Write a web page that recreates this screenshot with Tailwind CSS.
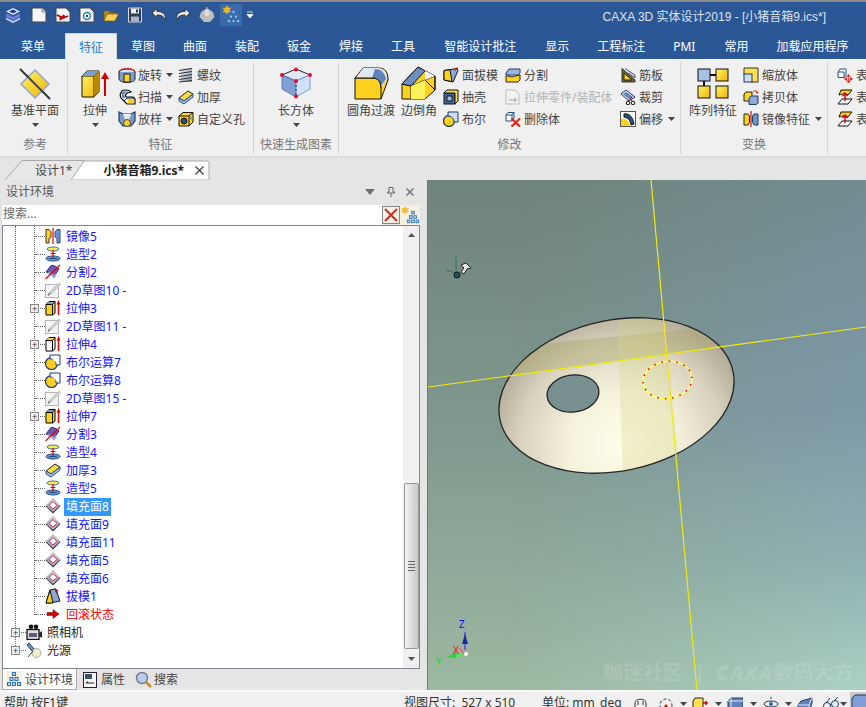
<!DOCTYPE html>
<html lang="zh">
<head>
<meta charset="utf-8">
<script src="https://cdn.jsdelivr.net/npm/@tailwindcss/browser@4"></script>
</head>
<body class="m-0 bg-[#e5e5e5]">
<svg width="0" height="0" class="absolute">
<defs>
<linearGradient id="gy" x1="0" y1="0" x2="1" y2="1"><stop offset="0" stop-color="#fff36a"/><stop offset="1" stop-color="#f0b400"/></linearGradient>
<linearGradient id="gb" x1="0" y1="0" x2="1" y2="1"><stop offset="0" stop-color="#c9d6ef"/><stop offset="1" stop-color="#5f82b8"/></linearGradient>
<linearGradient id="gg" x1="0" y1="0" x2="1" y2="1"><stop offset="0" stop-color="#e8edf5"/><stop offset="1" stop-color="#8b97ad"/></linearGradient>
<symbol id="tree" viewBox="0 0 16 16"><g fill="#bcd6f0" stroke="#2f6fb5" stroke-width="1"><rect x="6.5" y="1.5" width="3" height="3"/><rect x="4" y="6.500" width="3" height="3"/><rect x="9" y="6.500" width="3" height="3"/><rect x="1.500" y="11.500" width="3" height="3"/><rect x="6.500" y="11.500" width="3" height="3"/><rect x="11.500" y="11.500" width="3" height="3"/></g></symbol>
<symbol id="ext" viewBox="0 0 16 16"><path d="M1 4.500 4 1.500H10V13L7.500 15H1Z" fill="#ffd21f" stroke="#000"/><path d="M1 4.500H7.500L10 1.500M7.500 4.500V15" fill="none" stroke="#000"/><path d="M1.500 4 4 2H9L7 4Z" fill="#7aa0c8"/><path d="M13.500 15V4" stroke="#e00000" stroke-width="1.500"/><path d="M13.500 0 11.500 4.500H15.500Z" fill="#e00000"/></symbol>
<symbol id="extw" viewBox="0 0 16 16"><path d="M1 4.500 4 1.500H10V13L7.500 15H1Z" fill="#fff" stroke="#000"/><path d="M1 4.500H7.500L10 1.500M7.500 4.500V15" fill="none" stroke="#000"/><path d="M1.500 4 4 2H9L7 4Z" fill="#ffd21f"/><path d="M13.500 15V4" stroke="#e00000" stroke-width="1.500"/><path d="M13.500 0 11.500 4.500H15.500Z" fill="#e00000"/></symbol>
<symbol id="mir" viewBox="0 0 16 16"><path d="M1 1.500H4L6 4V9L4 10.500V15H1Z" fill="#ffd21f" stroke="#333"/><path d="M15 1.500H12L10 4V9L12 10.500V15H15Z" fill="#6d96c7" stroke="#2a4f85"/><path d="M8 0V16" stroke="#e00000" stroke-width="1.200"/></symbol>
<symbol id="shape" viewBox="0 0 16 16"><ellipse cx="8" cy="3" rx="6" ry="2" fill="#ffe94a" stroke="#3a6ea5"/><ellipse cx="8" cy="12.500" rx="7" ry="2.500" fill="#6d96c7" stroke="#1f4f8b"/><path d="M8 4V12" stroke="#e00000" stroke-width="1.200"/><path d="M5.500 7.500H10.500" stroke="#e00000"/><path d="M4 12.500H12" stroke="#1f4f8b"/></symbol>
<symbol id="split" viewBox="0 0 16 16"><path d="M1 8 6 1.500C9 1 12 3 14 5L9 12C7 10 4 8.500 1 8Z" fill="#6a5bb0" stroke="#332a78"/><path d="M3 9C6 9.500 8 11 9 13L11 10" fill="none" stroke="#a69de0" stroke-width="2"/><path d="M0.500 15 15 1" stroke="#e00000" stroke-width="1.100"/></symbol>
<symbol id="sk" viewBox="0 0 16 16"><rect x=".5" y="2.500" width="13" height="13" fill="#f4f4f4" stroke="#b4b4b4"/><path d="M5 11.500 15 1.500" stroke="#bdbdbd" stroke-width="3"/><path d="M5 11.500 14 2.500" stroke="#e8e8e8" stroke-width="1"/><path d="M3 13.500 5 11" stroke="#777" stroke-width="1.500"/></symbol>
<symbol id="bool" viewBox="0 0 16 16"><circle cx="6.500" cy="9.500" r="6" fill="#ffcf1f" stroke="#1c3c66" stroke-width="1.200"/><path d="M5 5V1H15V11H11C11.300 8 9 5 5 5Z" fill="#fff" stroke="#1c3c66"/><path d="M5.500 5.500H10.500V9.500C10.500 7.500 8 5.500 5.500 5.500Z" fill="#fff"/></symbol>
<symbol id="fill" viewBox="0 0 16 16"><path d="M8 .5 15.500 8 8 15.500 .5 8Z" fill="#2a2a2a"/><path d="M8 .5 15 7.500 8 14 1 7.500Z" fill="#a3b1d8"/><path d="M8 1 15 7.500 8 3.500 1 7.500Z" fill="#c9c9cf"/><path d="M8 3.500 12 7.500 8 11 4 7.500Z" fill="#fff" stroke="#e00000" stroke-width=".8"/></symbol>
<symbol id="draft" viewBox="0 0 16 16"><path d="M1 15 5 2 10.500 .8 15 13 5 15Z" fill="#8ea6d9" stroke="#111"/><path d="M1 15 5 2 8 15Z" fill="#ffd21f" stroke="#111"/><path d="M13 6 11 1.500M11 1.500 10.500 4M11 1.500 13.200 3" stroke="#d00000" fill="none"/></symbol>
<symbol id="thick" viewBox="0 0 16 16"><path d="M1 9 10 2 15 5 6 12Z" fill="#ffd84a" stroke="#222"/><path d="M1 9V12L6 15 15 8V5L6 12Z" fill="#a9bfe0" stroke="#2a4f85"/></symbol>
<symbol id="rev" viewBox="0 0 18 16"><ellipse cx="9" cy="5" rx="8" ry="3" fill="#d9e3f2" stroke="#222"/><path d="M1 5V12C1 14 5 15.500 9 15.500S17 14 17 12V5" fill="#7f9fc9" stroke="#222"/><rect x="6" y="7" width="6" height="8" fill="#ffd21f" stroke="#222"/><path d="M1 5C3 .5 15 .5 17 5" fill="none" stroke="#e00000" stroke-dasharray="2 1" stroke-width="1.300"/></symbol>
<symbol id="swp" viewBox="0 0 18 16"><path d="M3 4C3 1 7 .5 11 1.500L13 3 9 4C8 5 7 7 8 8H15L17 10V15H9L6 12 3 9C2 7 2 5 3 4Z" fill="#fff" stroke="#111" stroke-width="1.200"/><path d="M6 12 9 9H16" fill="none" stroke="#111"/><path d="M9 10H16V14H10Z" fill="#ffd21f"/><path d="M4 4C4 2.500 7 2 10 2.500L7 4C6 5 6 7 7 8L6 10 4 8Z" fill="#5f82b8"/></symbol>
<symbol id="loft" viewBox="0 0 18 16"><path d="M1 1 5 3H13L17 1V10L13 15H5L1 10Z" fill="#7e99c5" stroke="#1c3c66" stroke-width="1.200"/><path d="M5 3 7 9H11L13 3Z" fill="#e8edf5"/><circle cx="9" cy="12" r="3.500" fill="#ffd21f" stroke="#444"/></symbol>
<symbol id="thr" viewBox="0 0 16 16"><rect x="3" y="1" width="11" height="14" fill="url(#gg)"/><path d="M1 3.500 14 1.500M1 6.500 14 4.500M1 9.500 14 7.500M1 12.500 14 10.500M1 15 14 13.500" stroke="#333" stroke-width="1.100"/></symbol>
<symbol id="hole" viewBox="0 0 16 16"><path d="M1 5 5 1.500H15V11L11 15H1Z" fill="#ffd21f" stroke="#111"/><path d="M1 5H11V15M11 5 15 1.500" fill="none" stroke="#111"/><circle cx="6" cy="10" r="3" fill="#274f86" stroke="#111"/><circle cx="13" cy="7" r="1.500" fill="#7a93b7"/></symbol>
<symbol id="fdr" viewBox="0 0 16 16"><path d="M1 3.500 14 1.500 15 3.500 10 15 1 13Z" fill="#91a9dc" stroke="#111"/><path d="M1 13V3.500L7 2.800 9 14.500Z" fill="#ffd21f" stroke="#111"/><path d="M12 4 14.500 1M14.500 1 12.500 1.500M14.500 1V3" stroke="#c00" fill="none"/></symbol>
<symbol id="shell" viewBox="0 0 16 16"><rect x="1" y="4" width="11" height="11" fill="#3f6ea8" stroke="#111"/><path d="M1 4 4 1H15V12L12 15V4Z" fill="#ffe14d" stroke="#111"/><rect x="4" y="7" width="5" height="5" fill="#9bc0e6" stroke="#111"/></symbol>
<symbol id="bl" viewBox="0 0 16 16"><circle cx="6" cy="10" r="5.500" fill="#ffcf1f" stroke="#1c3c66" stroke-width="1.300"/><path d="M5 5V1H15V11H11C11.300 8 8.500 5 5 5Z" fill="#cfdcf0" stroke="#1c3c66"/></symbol>
<symbol id="sp" viewBox="0 0 16 16"><path d="M1 6 4 2H15V6L13 8H1Z" fill="#9db5dc" stroke="#1c3c66"/><path d="M1 9H4C7 11 9 9 15 8V13L13 15H1Z" fill="#ffd21f" stroke="#222"/></symbol>
<symbol id="gex" viewBox="0 0 16 16"><path d="M1 1H10L14 5V15H1Z" fill="#f2f2f2" stroke="#bbb"/><path d="M4 11H11M9 9 11.500 11 9 13" fill="none" stroke="#bbb" stroke-width="1.300"/></symbol>
<symbol id="del" viewBox="0 0 16 16"><path d="M1 4 3 1.500H9V8L7 10H1Z" fill="#fff" stroke="#1c4f86"/><path d="M1 4H7V10M7 4 9 1.500" fill="none" stroke="#1c4f86"/><path d="M6.500 7.500 15 15.500M15 7.500 6.500 15.500" stroke="#d8241c" stroke-width="2.200"/></symbol>
<symbol id="rib" viewBox="0 0 16 16"><path d="M2 15V1.500L15 13V15Z" fill="#6d6d2a" stroke="#333"/><path d="M4 13V6L12 13Z" fill="#ffd21f" stroke="#222"/><path d="M5 1.500 15 8V11L8 6" fill="#c7d2e8" stroke="#555"/></symbol>
<symbol id="cut" viewBox="0 0 16 16"><path d="M1 5 6 1 15 8 9 12Z" fill="#cfe0f4" stroke="#1c3c66"/><path d="M3 5 6 3 13 8 9 10Z" fill="#5f82b8"/><circle cx="8" cy="14" r="1.800" fill="none" stroke="#111"/><circle cx="13" cy="14" r="1.800" fill="none" stroke="#111"/><path d="M9 12 12 8M12 12 10 9" stroke="#d00000"/></symbol>
<symbol id="off" viewBox="0 0 16 16"><rect x=".5" y=".5" width="15" height="15" fill="#fff" stroke="#555"/><path d="M1 15V8C5 6 9 10 10 15Z" fill="#ffd21f"/><path d="M4 3C9 2 13 6 14 13L11 14C10 9 8 7 4 6Z" fill="#2a4f85" stroke="#111"/></symbol>
<symbol id="scale" viewBox="0 0 16 16"><path d="M1 1H15V15H8V8H1Z" fill="#ffe14d" stroke="#333"/><rect x="1" y="7" width="8" height="8" fill="#cfdcf0" stroke="#1c3c66"/></symbol>
<symbol id="copy" viewBox="0 0 16 16"><path d="M1 5 3 3H9V10L7 12H1Z" fill="#ffd21f" stroke="#222"/><path d="M6 9 8 7H15V14L13 15.500H6Z" fill="#8eaad6" stroke="#1c3c66"/><path d="M10 3C12 1 14 1.500 14.500 4M14.500 4 13 3.500M14.500 4 15.500 2.800" stroke="#d00000" fill="none"/></symbol>
<symbol id="mm" viewBox="0 0 16 16"><path d="M1 3H5L6.500 5V11L5 14H1Z" fill="#ffd21f" stroke="#222"/><path d="M15 3H11L9.500 5V11L11 14H15Z" fill="#6d96c7" stroke="#1c3c66"/><path d="M8 0V16" stroke="#e00000" stroke-width="1.200"/></symbol>
<symbol id="mv" viewBox="0 0 16 16"><path d="M1 5 3 2H9V9L7 10.500H1Z" fill="#fff" stroke="#1c4f86"/><path d="M1 5H7V10.500" fill="none" stroke="#1c4f86"/><path d="M11.500 8V15.500M8 12H15M11.500 7.500 10 9.500H13ZM11.500 16 10 14H13ZM7.500 12 9.500 10.500V13.500ZM15.500 12 13.500 10.500V13.500Z" stroke="#d8241c" fill="#d8241c" stroke-width=".7"/></symbol>
<symbol id="sf" viewBox="0 0 16 16"><path d="M4 1H15L11 6C8 4 6 5 2 6Z" fill="#ffd21f" stroke="#111"/><path d="M1 15 5 10H15L11 15Z" fill="#fff" stroke="#111"/><path d="M8 4V12M5.500 7 8 4 10.500 7" stroke="#d00000" stroke-width="1.400" fill="none"/></symbol>
<symbol id="cam" viewBox="0 0 16 16"><circle cx="5" cy="2.800" r="2.300" fill="#111"/><circle cx="10" cy="2.800" r="2.300" fill="#111"/><rect x="1" y="5.500" width="12" height="10" fill="#dfdfdf" stroke="#111" stroke-width="1.300"/><rect x="3" y="9" width="8" height="4" fill="#5c5a80"/><path d="M13 9 16 7V14L13 12Z" fill="#222"/></symbol>
<symbol id="lgt" viewBox="0 0 16 16"><path d="M1 3 3 1 8 7 6 9Z" fill="#6d96c7" stroke="#1c3c66"/><circle cx="10.500" cy="11" r="4.500" fill="#eeeecb" stroke="#aaa"/><path d="M2 15 7 9" stroke="#333"/></symbol>
<symbol id="wedge" viewBox="0 0 16 16"><path d="M1 8 4 4 15 1V6L12 15H1Z" fill="#5f82b8" stroke="#1c3c66"/><path d="M1 8H12V15M12 8 15 1" fill="none" stroke="#dfe8f4"/></symbol>
<symbol id="dn" viewBox="0 0 7 4"><path d="M0 0H7L3.500 4Z" fill="#444"/></symbol>
</defs>
</svg>

<div class="w-[866px] h-[707px] overflow-hidden flex flex-col text-[12px] text-[#444] font-['Noto_Sans','Noto_Sans_CJK_SC',sans-serif] leading-[16px]">

  <!-- title + tabs -->
  <div class="h-[59px] bg-[#2b5797] border-t-2 border-[#8a8a8a] flex flex-col shrink-0">
    <div class="h-[31px] flex items-start relative">
      <div class="absolute left-0 top-0 flex items-center h-[25px] pl-[5px]">
        <svg class="w-[16px] h-[16px]" viewBox="0 0 16 16"><path d="M8 1 15 4.500 8 8 1 4.500Z" fill="#e6ecfa"/><path d="M1 6.500 8 10 15 6.500V9.500L8 13 1 9.500Z" fill="#6d7fe0"/><path d="M1 10.500 8 14 15 10.500V12.500L8 16 1 12.500Z" fill="#c6cef0"/><path d="M8 2.500 12 4.500 8 6.500 4 4.500Z" fill="#24389a"/></svg>
        <svg class="w-[16px] h-[16px] ml-[10px]" viewBox="0 0 16 16"><path d="M1 1H11L15 5V15H1Z" fill="#f6f6f6" stroke="#444"/><path d="M11 1V5H15" fill="#ddd" stroke="#888"/></svg>
        <svg class="w-[16px] h-[16px] ml-[8px]" viewBox="0 0 16 16"><path d="M1 1H11L15 5V15H1Z" fill="#f6f6f6" stroke="#444"/><path d="M2 8 6 10 5 13 9 8 8 11 13 9" stroke="#c00000" stroke-width="1.800" fill="none"/></svg>
        <svg class="w-[16px] h-[16px] ml-[8px]" viewBox="0 0 16 16"><path d="M1 1H11L15 5V15H1Z" fill="#f6f6f6" stroke="#444"/><circle cx="8" cy="9" r="3.500" fill="none" stroke="#2d7fb5" stroke-width="1.500"/><rect x="7" y="8" width="2" height="2" fill="#155"/></svg>
        <svg class="w-[16px] h-[16px] ml-[8px]" viewBox="0 0 16 16"><path d="M1 4H6L7 5.500H13V7H4L1 14Z" fill="#b88e1a" stroke="#6a5210" stroke-width=".6"/><path d="M1 14 4 7H15.500L12 14Z" fill="#f5cf52" stroke="#6a5210" stroke-width=".6"/></svg>
        <svg class="w-[16px] h-[16px] ml-[8px]" viewBox="0 0 16 16"><path d="M1.500 1H14.500V15H1.500Z" fill="#2f3f55" stroke="#d8d8d8"/><rect x="4" y="1.500" width="8" height="5" fill="#eee"/><rect x="4" y="9.500" width="8" height="5" fill="#a9b5c6"/><rect x="9" y="2.500" width="2" height="3" fill="#2f3f55"/></svg>
        <svg class="w-[16px] h-[16px] ml-[8px]" viewBox="0 0 16 16"><path d="M1 6 6 1.500V4.500C11 4 15 7 15 13C13 9.500 10.500 8 6 8V10.500Z" fill="#e8e8e8" stroke="#333"/></svg>
        <svg class="w-[16px] h-[16px] ml-[8px]" viewBox="0 0 16 16"><path d="M15 6 10 1.500V4.500C5 4 1 7 1 13C3 9.500 5.500 8 10 8V10.500Z" fill="#e8e8e8" stroke="#333"/></svg>
        <svg class="w-[16px] h-[16px] ml-[8px]" viewBox="0 0 16 16"><path d="M8 1 14 5 15.500 10 11 15H5L.5 10 2 5Z" fill="#bdbdbd"/><path d="M8 1 11 7 8 10 5 7Z" fill="#e0e0e0"/><rect x="7" y="0" width="2" height="2" fill="#888"/></svg>
        <div class="w-[22px] h-[22px] ml-[5px] bg-[#3a6aa8] relative flex items-center justify-center">
          <svg class="w-[15px] h-[15px] mt-[3px] ml-[4px]"><use href="#tree"/></svg>
          <span class="absolute left-[2px] top-[0px] text-[#f5b91e] text-[11px] leading-[11px]">✱</span>
        </div>
        <svg class="w-[8px] h-[8px] ml-[4px]" viewBox="0 0 8 8"><path d="M1 1H7M1 3.500H7L4 7Z" stroke="#fff" fill="#fff" stroke-width=".8"/></svg>
      </div>
      <div class="ml-auto mr-[40px] mt-[7px] text-[#dde4ee] text-[12px] leading-[16px] font-['Liberation_Sans','Noto_Sans_CJK_SC',sans-serif]">CAXA 3D 实体设计2019 - [小猪音箱9.ics*]</div>
    </div>
    <div class="h-[26px] flex pl-[7px] text-white">
      <div class="px-[14px] pt-[6px]">菜单</div>
      <div class="px-[13px] pt-[6px] ml-[6px] bg-[#f0f0f0] text-[#1a7fd0] border border-b-0 border-[#d4d4d4] rounded-t-[1px]">特征</div>
      <div class="px-[14px] pt-[6px]">草图</div>
      <div class="px-[14px] pt-[6px]">曲面</div>
      <div class="px-[14px] pt-[6px]">装配</div>
      <div class="px-[14px] pt-[6px]">钣金</div>
      <div class="px-[14px] pt-[6px]">焊接</div>
      <div class="px-[14px] pt-[6px]">工具</div>
      <div class="px-[14px] pt-[6px] ml-[1px]">智能设计批注</div>
      <div class="px-[14px] pt-[6px] ml-[1px]">显示</div>
      <div class="px-[14px] pt-[6px]">工程标注</div>
      <div class="px-[14px] pt-[6px]">PMI</div>
      <div class="px-[14px] pt-[6px] ml-[1px]">常用</div>
      <div class="px-[14px] pt-[6px]">加载应用程序</div>
    </div>
  </div>

  <!-- ribbon -->
  <div class="h-[99px] bg-[#f0f0f0] border-b-2 border-[#dcdcdc] flex pt-[3px] pl-[3px] shrink-0 overflow-hidden [&_span]:relative [&_span]:top-[1px]">
    <!-- 参考 -->
    <div class="w-[65px] h-[92px] border-r border-[#d4d4d4] flex flex-col shrink-0">
      <div class="flex-1 flex flex-col items-center">
        <svg class="w-[34px] h-[34px] mt-[5px]" viewBox="0 0 34 34"><path d="M2 2 32 32" stroke="#333" stroke-width="2"/><path d="M17 3 31 17 17 31 3 17Z" fill="url(#gy)" stroke="#8fa8d8" stroke-width="1.500"/><path d="M9 9 25 25" stroke="#444" stroke-width="2"/></svg>
        <div class="mt-[2px]">基准平面</div>
        <svg class="w-[7px] h-[4px] mt-[4px]"><use href="#dn"/></svg>
      </div>
      <div class="h-[22px] text-center text-[#777] leading-[26px]">参考</div>
    </div>
    <!-- 特征 -->
    <div class="w-[186px] h-[92px] border-r border-[#d4d4d4] flex flex-col shrink-0">
      <div class="flex-1 flex">
        <div class="w-[38px] ml-[8px] flex flex-col items-center">
          <svg class="w-[30px] h-[30px] mt-[7px]" viewBox="0 0 30 30"><path d="M2 7 7 2H19V23L14 28H2Z" fill="url(#gy)" stroke="#111"/><path d="M2 7H14V28M14 7 19 2" fill="none" stroke="#111"/><path d="M14 7 19 2V23L14 28Z" fill="#b88a00"/><path d="M2 7 7 2H19L14 7Z" fill="#7aa0c8"/><path d="M25 27V9" stroke="#d00000" stroke-width="2"/><path d="M25 3 21 10H29Z" fill="#d00000"/></svg>
          <div class="mt-[4px]">拉伸</div>
          <svg class="w-[7px] h-[4px] mt-[4px]"><use href="#dn"/></svg>
        </div>
        <div class="w-[60px] ml-[4px] pt-[2px] flex flex-col">
          <div class="h-[22px] flex items-center"><svg class="w-[18px] h-[16px]"><use href="#rev"/></svg><span class="ml-[2px]">旋转</span><svg class="w-[7px] h-[4px] ml-[4px]"><use href="#dn"/></svg></div>
          <div class="h-[22px] flex items-center"><svg class="w-[18px] h-[16px]"><use href="#swp"/></svg><span class="ml-[2px]">扫描</span><svg class="w-[7px] h-[4px] ml-[4px]"><use href="#dn"/></svg></div>
          <div class="h-[22px] flex items-center"><svg class="w-[18px] h-[16px]"><use href="#loft"/></svg><span class="ml-[2px]">放样</span><svg class="w-[7px] h-[4px] ml-[4px]"><use href="#dn"/></svg></div>
        </div>
        <div class="pt-[2px] flex flex-col">
          <div class="h-[22px] flex items-center"><svg class="w-[16px] h-[16px]"><use href="#thr"/></svg><span class="ml-[3px]">螺纹</span></div>
          <div class="h-[22px] flex items-center"><svg class="w-[16px] h-[16px]"><use href="#thick"/></svg><span class="ml-[3px]">加厚</span></div>
          <div class="h-[22px] flex items-center"><svg class="w-[16px] h-[16px]"><use href="#hole"/></svg><span class="ml-[3px]">自定义孔</span></div>
        </div>
      </div>
      <div class="h-[22px] text-center text-[#777] leading-[26px]">特征</div>
    </div>
    <!-- 快速 -->
    <div class="w-[85px] h-[92px] border-r border-[#d4d4d4] flex flex-col shrink-0">
      <div class="flex-1 flex flex-col items-center">
        <svg class="w-[32px] h-[32px] mt-[5px]" viewBox="0 0 32 32"><path d="M16 2 30 8 16 14 2 8Z" fill="#dfe8f6" stroke="#222"/><path d="M2 8 16 14V30L2 22Z" fill="#7e9fd6" stroke="#5f7fb8"/><path d="M30 8 16 14V30L30 22Z" fill="#cfe0f7" stroke="#7e9fd6"/><path d="M16 14V30" stroke="#222" stroke-dasharray="2 2"/><circle cx="16" cy="2.500" r="2" fill="#e01030"/><circle cx="2" cy="8" r="2" fill="#e01030"/><circle cx="30" cy="8" r="2" fill="#e01030"/><circle cx="16" cy="14" r="2" fill="#e01030"/><circle cx="16" cy="29.500" r="2" fill="#e01030"/></svg>
        <div class="mt-[4px]">长方体</div>
        <svg class="w-[7px] h-[4px] mt-[4px]"><use href="#dn"/></svg>
      </div>
      <div class="h-[22px] text-center text-[#777] leading-[26px] whitespace-nowrap">快速生成图素</div>
    </div>
    <!-- 修改 -->
    <div class="w-[342px] h-[92px] border-r border-[#d4d4d4] flex flex-col shrink-0">
      <div class="flex-1 flex">
        <div class="w-[48px] ml-[8px] flex flex-col items-center">
          <svg class="w-[36px] h-[34px] mt-[4px]" viewBox="0 0 36 34"><path d="M2 12 10 2H26C32 2 35 6 35 14L28 33H2Z" fill="#ffd21f" stroke="#111"/><path d="M2 12H20C25 12 28 16 28 22V33" fill="none" stroke="#111"/><path d="M10 2H25C31 2 34 6 34 13L28 22C28 16 25 12 20 12H3Z" fill="#dfe7f3"/><path d="M22 3C28 3 32 7 33 13L28 20C27 15 24 12 19 12Z" fill="#5f82b8"/><path d="M2 12H20C25 12 28 16 28 22" fill="none" stroke="#111"/></svg>
          <div class="mt-[3px] whitespace-nowrap">圆角过渡</div>
        </div>
        <div class="w-[36px] ml-[6px] flex flex-col items-center">
          <svg class="w-[36px] h-[34px] mt-[4px]" viewBox="0 0 36 34"><path d="M1 18 17 1 34 10V24L24 33H1Z" fill="#ffd21f" stroke="#111"/><path d="M1 18 10 20 24 14 34 10" fill="none" stroke="#111"/><path d="M1 18 17 1 24 5 10 20Z" fill="#6d8fc0" stroke="#111"/><path d="M17 1 34 10 24 14 24 5Z" fill="#f6f6f6"/><path d="M10 20V33M24 14 34 24V10" fill="none" stroke="#111"/><path d="M10 20 24 14V33H10Z" fill="#fff25a"/></svg>
          <div class="mt-[3px] whitespace-nowrap">边倒角</div>
        </div>
        <div class="w-[62px] ml-[6px] pt-[2px] flex flex-col">
          <div class="h-[22px] flex items-center"><svg class="w-[16px] h-[16px]"><use href="#fdr"/></svg><span class="ml-[3px]">面拔模</span></div>
          <div class="h-[22px] flex items-center"><svg class="w-[16px] h-[16px]"><use href="#shell"/></svg><span class="ml-[3px]">抽壳</span></div>
          <div class="h-[22px] flex items-center"><svg class="w-[16px] h-[16px]"><use href="#bl"/></svg><span class="ml-[3px]">布尔</span></div>
        </div>
        <div class="w-[115px] pt-[2px] flex flex-col">
          <div class="h-[22px] flex items-center"><svg class="w-[16px] h-[16px]"><use href="#sp"/></svg><span class="ml-[3px]">分割</span></div>
          <div class="h-[22px] flex items-center"><svg class="w-[16px] h-[16px]"><use href="#gex"/></svg><span class="ml-[3px] text-[#b4b4b4] whitespace-nowrap">拉伸零件/装配体</span></div>
          <div class="h-[22px] flex items-center"><svg class="w-[16px] h-[16px]"><use href="#del"/></svg><span class="ml-[3px]">删除体</span></div>
        </div>
        <div class="pt-[2px] flex flex-col">
          <div class="h-[22px] flex items-center"><svg class="w-[16px] h-[16px]"><use href="#rib"/></svg><span class="ml-[3px]">筋板</span></div>
          <div class="h-[22px] flex items-center"><svg class="w-[16px] h-[16px]"><use href="#cut"/></svg><span class="ml-[3px]">裁剪</span></div>
          <div class="h-[22px] flex items-center"><svg class="w-[16px] h-[16px]"><use href="#off"/></svg><span class="ml-[3px]">偏移</span><svg class="w-[7px] h-[4px] ml-[5px]"><use href="#dn"/></svg></div>
        </div>
      </div>
      <div class="h-[22px] text-center text-[#777] leading-[26px]">修改</div>
    </div>
    <!-- 变换 -->
    <div class="w-[147px] h-[92px] border-r border-[#d4d4d4] flex flex-col shrink-0">
      <div class="flex-1 flex">
        <div class="w-[48px] ml-[8px] flex flex-col items-center">
          <svg class="w-[34px] h-[32px] mt-[5px]" viewBox="0 0 34 32"><rect x="2" y="2" width="12" height="12" fill="#a9bfe6" stroke="#111"/><rect x="20" y="2" width="12" height="12" fill="url(#gy)" stroke="#111"/><rect x="2" y="19" width="12" height="12" fill="url(#gy)" stroke="#111"/><rect x="20" y="19" width="12" height="12" fill="url(#gy)" stroke="#111"/><path d="M14 8H20M8 14V19" stroke="#111" stroke-width="2"/></svg>
          <div class="mt-[4px] whitespace-nowrap">阵列特征</div>
        </div>
        <div class="ml-[6px] pt-[2px] flex flex-col">
          <div class="h-[22px] flex items-center"><svg class="w-[16px] h-[16px]"><use href="#scale"/></svg><span class="ml-[3px]">缩放体</span></div>
          <div class="h-[22px] flex items-center"><svg class="w-[16px] h-[16px]"><use href="#copy"/></svg><span class="ml-[3px]">拷贝体</span></div>
          <div class="h-[22px] flex items-center"><svg class="w-[16px] h-[16px]"><use href="#mm"/></svg><span class="ml-[3px]">镜像特征</span><svg class="w-[7px] h-[4px] ml-[5px]"><use href="#dn"/></svg></div>
        </div>
      </div>
      <div class="h-[22px] text-center text-[#777] leading-[26px]">变换</div>
    </div>
    <!-- 表 -->
    <div class="flex-1 pl-[9px] pt-[2px] flex flex-col">
      <div class="h-[22px] flex items-center"><svg class="w-[16px] h-[16px]"><use href="#mv"/></svg><span class="ml-[3px]">表</span></div>
      <div class="h-[22px] flex items-center"><svg class="w-[16px] h-[16px]"><use href="#sf"/></svg><span class="ml-[3px]">表</span></div>
      <div class="h-[22px] flex items-center"><svg class="w-[16px] h-[16px]"><use href="#sf"/></svg><span class="ml-[3px]">表</span></div>
    </div>
  </div>

  <!-- document tabs -->
  <div class="h-[22px] bg-[#e5e5e5] relative flex pl-[35px] pt-[5px] shrink-0">
    <svg class="absolute left-0 top-0 w-[220px] h-[22px]" viewBox="0 0 220 22"><path d="M5 22 22 2.500H84V22" fill="#e8e8e8" stroke="#a9a9a9"/><path d="M71 22 84 3H207Q209 3 209 5V22Z" fill="#fff" stroke="#a9a9a9"/></svg>
    <span class="relative">设计1*</span>
    <span class="relative ml-[31px] font-bold text-[#222] whitespace-nowrap">小猪音箱9.ics*</span>
    <svg class="relative ml-[11px] mt-[3px] w-[9px] h-[9px]" viewBox="0 0 9 9"><path d="M.5 .5 8.500 8.500M8.500 .5 .5 8.500" stroke="#444" stroke-width="1.300"/></svg>
  </div>

  <!-- main -->
  <div class="flex h-[510px] shrink-0">
    <!-- left panel -->
    <div class="w-[428px] flex flex-col bg-[#e5e5e5] border-r border-[#777] pr-[7px] shrink-0">
      <div class="h-[25px] flex items-center pl-[6px] pb-[2px] text-[#555] shrink-0">
        <span>设计环境</span>
        <svg class="w-[10px] h-[6px] ml-auto mr-[12px]" viewBox="0 0 10 6"><path d="M0 0H10L5 6Z" fill="#6f6f6f"/></svg>
        <svg class="w-[8px] h-[10px] mr-[11px]" viewBox="0 0 8 10"><path d="M2 .5H6V5H7.500V6H.5V5H2ZM4 6V10" fill="none" stroke="#666"/></svg>
        <svg class="w-[8px] h-[8px] mr-[6px]" viewBox="0 0 8 8"><path d="M.5 .5 7.500 7.500M7.500 .5 .5 7.500" stroke="#666" stroke-width="1.200"/></svg>
      </div>
      <div class="h-[20px] flex items-center pl-[2px] shrink-0">
        <div class="w-[380px] h-[20px] bg-white pl-[1px] pb-[3px] text-[#666] leading-[16px] flex items-center">搜索...</div>
        <div class="w-[18px] h-[18px] bg-[#f3f0e6] border border-[#888] flex items-center justify-center">
          <svg class="w-[14px] h-[14px]" viewBox="0 0 14 14"><path d="M1 1 13 13M13 1 1 13" stroke="#c8322a" stroke-width="2"/></svg>
        </div>
        <div class="w-[20px] h-[20px] bg-[#f5f0df] relative flex items-end justify-end pb-[1px]">
          <svg class="w-[14px] h-[14px]"><use href="#tree"/></svg>
          <span class="absolute left-[1px] top-[0px] text-[#f5b91e] text-[10px] leading-[10px]">✱</span>
        </div>
      </div>
      <!-- tree -->
      <div class="h-[444px] ml-[2px] bg-white border border-[#828790] flex relative overflow-hidden shrink-0">
        <div class="absolute left-[12px] top-0 h-[426px] border-l border-dotted border-[#666]"></div>
        <div class="absolute left-[31px] top-0 h-[389px] border-l border-dotted border-[#666]"></div>
        <div class="flex-1 pt-[1px] text-[#1414ff] leading-[18px] [&_span]:relative [&_span]:top-[1px]">
          <div class="h-[18px] flex items-center pl-[32px]"><i class="w-[10px] border-t border-dotted border-[#666]"></i><svg class="w-[16px] h-[16px]"><use href="#mir"/></svg><span class="ml-[5px]">镜像5</span></div>
          <div class="h-[18px] flex items-center pl-[32px]"><i class="w-[10px] border-t border-dotted border-[#666]"></i><svg class="w-[16px] h-[16px]"><use href="#shape"/></svg><span class="ml-[5px]">造型2</span></div>
          <div class="h-[18px] flex items-center pl-[32px]"><i class="w-[10px] border-t border-dotted border-[#666]"></i><svg class="w-[16px] h-[16px]"><use href="#split"/></svg><span class="ml-[5px]">分割2</span></div>
          <div class="h-[18px] flex items-center pl-[32px]"><i class="w-[10px] border-t border-dotted border-[#666]"></i><svg class="w-[16px] h-[16px]"><use href="#sk"/></svg><span class="ml-[5px]">2D草图10 -</span></div>
          <div class="h-[18px] flex items-center pl-[32px] relative"><b class="absolute left-[27px] w-[9px] h-[9px] bg-[#eee] border border-[#888] text-[#333] text-[9px] leading-[7px] font-normal text-center">+</b><i class="w-[10px] border-t border-dotted border-[#666]"></i><svg class="w-[16px] h-[16px]"><use href="#ext"/></svg><span class="ml-[5px]">拉伸3</span></div>
          <div class="h-[18px] flex items-center pl-[32px]"><i class="w-[10px] border-t border-dotted border-[#666]"></i><svg class="w-[16px] h-[16px]"><use href="#sk"/></svg><span class="ml-[5px]">2D草图11 -</span></div>
          <div class="h-[18px] flex items-center pl-[32px] relative"><b class="absolute left-[27px] w-[9px] h-[9px] bg-[#eee] border border-[#888] text-[#333] text-[9px] leading-[7px] font-normal text-center">+</b><i class="w-[10px] border-t border-dotted border-[#666]"></i><svg class="w-[16px] h-[16px]"><use href="#extw"/></svg><span class="ml-[5px]">拉伸4</span></div>
          <div class="h-[18px] flex items-center pl-[32px]"><i class="w-[10px] border-t border-dotted border-[#666]"></i><svg class="w-[16px] h-[16px]"><use href="#bool"/></svg><span class="ml-[5px]">布尔运算7</span></div>
          <div class="h-[18px] flex items-center pl-[32px]"><i class="w-[10px] border-t border-dotted border-[#666]"></i><svg class="w-[16px] h-[16px]"><use href="#bool"/></svg><span class="ml-[5px]">布尔运算8</span></div>
          <div class="h-[18px] flex items-center pl-[32px]"><i class="w-[10px] border-t border-dotted border-[#666]"></i><svg class="w-[16px] h-[16px]"><use href="#sk"/></svg><span class="ml-[5px]">2D草图15 -</span></div>
          <div class="h-[18px] flex items-center pl-[32px] relative"><b class="absolute left-[27px] w-[9px] h-[9px] bg-[#eee] border border-[#888] text-[#333] text-[9px] leading-[7px] font-normal text-center">+</b><i class="w-[10px] border-t border-dotted border-[#666]"></i><svg class="w-[16px] h-[16px]"><use href="#ext"/></svg><span class="ml-[5px]">拉伸7</span></div>
          <div class="h-[18px] flex items-center pl-[32px]"><i class="w-[10px] border-t border-dotted border-[#666]"></i><svg class="w-[16px] h-[16px]"><use href="#split"/></svg><span class="ml-[5px]">分割3</span></div>
          <div class="h-[18px] flex items-center pl-[32px]"><i class="w-[10px] border-t border-dotted border-[#666]"></i><svg class="w-[16px] h-[16px]"><use href="#shape"/></svg><span class="ml-[5px]">造型4</span></div>
          <div class="h-[18px] flex items-center pl-[32px]"><i class="w-[10px] border-t border-dotted border-[#666]"></i><svg class="w-[16px] h-[16px]"><use href="#thick"/></svg><span class="ml-[5px]">加厚3</span></div>
          <div class="h-[18px] flex items-center pl-[32px]"><i class="w-[10px] border-t border-dotted border-[#666]"></i><svg class="w-[16px] h-[16px]"><use href="#shape"/></svg><span class="ml-[5px]">造型5</span></div>
          <div class="h-[18px] flex items-center pl-[32px]"><i class="w-[10px] border-t border-dotted border-[#666]"></i><svg class="w-[16px] h-[16px]"><use href="#fill"/></svg><span class="ml-[3px] px-[2px] bg-[#3399ff] text-white">填充面8</span></div>
          <div class="h-[18px] flex items-center pl-[32px]"><i class="w-[10px] border-t border-dotted border-[#666]"></i><svg class="w-[16px] h-[16px]"><use href="#fill"/></svg><span class="ml-[5px]">填充面9</span></div>
          <div class="h-[18px] flex items-center pl-[32px]"><i class="w-[10px] border-t border-dotted border-[#666]"></i><svg class="w-[16px] h-[16px]"><use href="#fill"/></svg><span class="ml-[5px]">填充面11</span></div>
          <div class="h-[18px] flex items-center pl-[32px]"><i class="w-[10px] border-t border-dotted border-[#666]"></i><svg class="w-[16px] h-[16px]"><use href="#fill"/></svg><span class="ml-[5px]">填充面5</span></div>
          <div class="h-[18px] flex items-center pl-[32px]"><i class="w-[10px] border-t border-dotted border-[#666]"></i><svg class="w-[16px] h-[16px]"><use href="#fill"/></svg><span class="ml-[5px]">填充面6</span></div>
          <div class="h-[18px] flex items-center pl-[32px]"><i class="w-[10px] border-t border-dotted border-[#666]"></i><svg class="w-[16px] h-[16px]"><use href="#draft"/></svg><span class="ml-[5px]">拔模1</span></div>
          <div class="h-[18px] flex items-center pl-[32px]"><i class="w-[10px] border-t border-dotted border-[#666]"></i><svg class="w-[16px] h-[12px]" viewBox="0 0 16 12"><path d="M2 4.500H8V1.500L14 6 8 10.500V7.500H2Z" fill="#d80000" stroke="#600" stroke-width=".5"/></svg><span class="ml-[5px] text-[#ff0000]">回滚状态</span></div>
          <div class="h-[18px] flex items-center pl-[13px] text-[#222] relative"><b class="absolute left-[8px] w-[9px] h-[9px] bg-[#eee] border border-[#888] text-[#333] text-[9px] leading-[7px] font-normal text-center">+</b><i class="w-[10px] border-t border-dotted border-[#666]"></i><svg class="w-[16px] h-[16px]"><use href="#cam"/></svg><span class="ml-[5px]">照相机</span></div>
          <div class="h-[18px] flex items-center pl-[13px] text-[#222] relative"><b class="absolute left-[8px] w-[9px] h-[9px] bg-[#eee] border border-[#888] text-[#333] text-[9px] leading-[7px] font-normal text-center">+</b><i class="w-[10px] border-t border-dotted border-[#666]"></i><svg class="w-[16px] h-[16px]"><use href="#lgt"/></svg><span class="ml-[5px]">光源</span></div>
        </div>
        <!-- scrollbar -->
        <div class="w-[16px] h-[442px] mr-[0px] bg-[#f0f0f0] flex flex-col items-center shrink-0">
          <svg class="w-[7px] h-[4px] mt-[7px]" viewBox="0 0 7 4"><path d="M0 4H7L3.500 0Z" fill="#555"/></svg>
          <div class="mt-[246px] w-[15px] h-[166px] rounded-[2px] border border-[#999] bg-linear-to-r from-[#f4f4f4] to-[#c8c8c8] flex flex-col items-center justify-center gap-[2px] shrink-0">
            <i class="block w-[7px] h-px bg-[#666]"></i><i class="block w-[7px] h-px bg-[#666]"></i><i class="block w-[7px] h-px bg-[#666]"></i><i class="block w-[7px] h-px bg-[#666]"></i>
          </div>
          <svg class="w-[7px] h-[4px] mt-[8px]" viewBox="0 0 7 4"><path d="M0 0H7L3.500 4Z" fill="#555"/></svg>
        </div>
      </div>
      <!-- bottom tabs -->
      <div class="h-[21px] flex pl-[2px] shrink-0">
        <div class="w-[75px] h-[21px] bg-white border border-t-0 border-[#a9a9a9] flex items-center pl-[3px]"><div class="w-[16px] h-[16px] bg-[#f5f0df]"><svg class="w-[16px] h-[16px]"><use href="#tree"/></svg></div><span class="ml-[3px] pt-[1px] whitespace-nowrap">设计环境</span></div>
        <div class="flex items-center ml-[6px]"><svg class="w-[14px] h-[16px]" viewBox="0 0 14 16"><rect x=".5" y=".5" width="13" height="15" fill="#f4f4f4" stroke="#223"/><rect x="2" y="2" width="7" height="5" fill="#39506f"/><path d="M3 11H11M3 11 5 9.500" stroke="#222" fill="none"/></svg><span class="ml-[4px] pt-[1px]">属性</span></div>
        <div class="flex items-center ml-[10px]"><svg class="w-[17px] h-[17px]" viewBox="0 0 17 17"><circle cx="7" cy="7" r="5.500" fill="#b9cdea" stroke="#6d7a8a" stroke-width="1.400"/><path d="M11 11 16 16" stroke="#c88a2a" stroke-width="2.500"/></svg><span class="ml-[2px] pt-[1px]">搜索</span></div>
      </div>
    </div>

    <!-- viewport -->
    <div class="flex-1 relative overflow-hidden bg-[#8aa49c]">
      <svg class="block w-[438px] h-[510px]" viewBox="428 180 438 510">
        <defs>
          <linearGradient id="vb" x1="0" y1="0" x2="0" y2="1"><stop offset="0" stop-color="#6f847b"/><stop offset=".5" stop-color="#80998f"/><stop offset="1" stop-color="#9cb9a2"/></linearGradient>
          <linearGradient id="vc" x1="0" y1="0" x2="0" y2="1"><stop offset="0" stop-color="#728c92"/><stop offset=".45" stop-color="#7e99a9"/><stop offset=".75" stop-color="#90b0b2"/><stop offset="1" stop-color="#acd0c4"/></linearGradient>
          <linearGradient id="vm" x1="0" y1="0" x2="1" y2="0"><stop offset=".2" stop-color="#000"/><stop offset="1" stop-color="#fff"/></linearGradient>
          <mask id="vk" maskUnits="userSpaceOnUse" x="428" y="180" width="438" height="510"><rect x="428" y="180" width="438" height="510" fill="url(#vm)"/></mask>
          <radialGradient id="disc" gradientUnits="userSpaceOnUse" cx="612" cy="445" r="135"><stop offset="0" stop-color="#fffeea"/><stop offset=".4" stop-color="#f5f2dc"/><stop offset=".75" stop-color="#d8d2be"/><stop offset="1" stop-color="#b3ac98"/></radialGradient>
          <clipPath id="dc"><ellipse cx="616.500" cy="395.500" rx="119" ry="75.500" transform="rotate(-11.600 616.500 395.500)"/></clipPath>
        </defs>
        <rect x="428" y="180" width="438" height="510" fill="url(#vb)"/>
        <rect x="428" y="180" width="438" height="510" fill="url(#vc)" mask="url(#vk)"/>
        <ellipse cx="616.500" cy="395.500" rx="119" ry="75.500" transform="rotate(-11.600 616.500 395.500)" fill="url(#disc)"/>
        <g clip-path="url(#dc)">
          <path d="M480 350 752 323 760 342 480 380.500Z" fill="#a9a66a" fill-opacity=".42"/>
          <path d="M617 300H662L681 480H623Z" fill="#d8d88a" fill-opacity=".32"/>
        </g>
        <ellipse cx="573" cy="393.500" rx="26" ry="18.500" transform="rotate(-7 573 393.500)" fill="#78908f" stroke="#222" stroke-width="1.300"/>
        <ellipse cx="616.500" cy="395.500" rx="119" ry="75.500" transform="rotate(-11.600 616.500 395.500)" fill="none" stroke="#262626" stroke-width="1.300"/>
        <ellipse cx="667.500" cy="380" rx="24.500" ry="18.500" transform="rotate(-8 667.500 380)" fill="none" stroke="#ffff60" stroke-width="1.500"/>
        <ellipse cx="667.500" cy="380" rx="24.500" ry="18.500" transform="rotate(-8 667.500 380)" fill="none" stroke="#d80000" stroke-width="1.500" stroke-dasharray="1.500 6"/>
        <path d="M428 387 866 327M651 180 697 690" stroke="#f2ea10" stroke-width="1.200"/>
        <!-- pin -->
        <path d="M456 255V272M456 273 446 270M457 274 466 272" stroke="#1c6f6a" stroke-width=".8" fill="none"/>
        <circle cx="457" cy="275" r="3" fill="#1e5a5a" stroke="#111"/>
        <path d="M461 272 464 268 461 265 466 263 471 268 467 269 464 274Z" fill="#e8e8e8" stroke="#222"/>
        <!-- triad -->
        <path d="M465 632V650" stroke="#6a5fe0" stroke-width="2"/>
        <path d="M465 634 462 644H468Z" fill="#1a2a9a"/>
        <path d="M465 654 451 657" stroke="#55e060" stroke-width="2.500"/>
        <path d="M447 657 456 652 456 658Z" fill="#30d040"/>
        <path d="M465 654 459 648" stroke="#ff6060" stroke-width="1.500"/>
        <circle cx="466" cy="654" r="2" fill="#fff"/>
      </svg>
      <span class="absolute left-[31px] top-[439px] text-[10px] leading-[10px] text-[#1010ee]">Z</span>
      <span class="absolute left-[25px] top-[465px] text-[10px] leading-[10px] text-[#e01010]">X</span>
      <span class="absolute left-[8px] top-[476px] text-[10px] leading-[10px] text-[#20dd30]">Y</span>
      <div class="absolute left-[175px] top-[481px] text-white/15 text-[20px] leading-[24px] font-bold whitespace-nowrap flex items-center">咖迷社区<span class="ml-[11px]">|</span><span class="ml-[11px] italic tracking-[2px]">CAXA</span>数码大方</div>
    </div>
  </div>

  <!-- status -->
  <div class="flex-1 bg-[#f0f0f0] border-t-2 border-[#fafafa] flex items-start pt-[3px] text-[#333] relative whitespace-nowrap">
    <span class="ml-[4px]">帮助 按F1键</span>
    <span class="absolute left-[404px] top-[3px]">视图尺寸:&nbsp; 527 x 510</span>
    <span class="absolute left-[542px] top-[3px]">单位: mm_deg</span>
    <div class="absolute left-[634px] top-[5px] flex items-start">
      <svg class="w-[13px] h-[16px]" viewBox="0 0 13 16"><path d="M1 16V6C1 1 12 1 12 6V16M4 8V4M9 8V4" fill="none" stroke="#333"/></svg>
      <svg class="w-[16px] h-[16px] ml-[11px]" viewBox="0 0 16 16"><circle cx="8" cy="8" r="6" fill="none" stroke="#333" stroke-dasharray="3 2"/><circle cx="8" cy="9" r="1.500" fill="#d00"/></svg>
      <svg class="w-[7px] h-[4px] ml-[6px] mt-[5px]"><use href="#dn"/></svg>
      <svg class="w-[16px] h-[16px] ml-[5px]" viewBox="0 0 16 16"><path d="M1 4 3 1H11V14H1Z" fill="#ffe14d" stroke="#222"/><path d="M11 6H16M14 4V8" stroke="#d00" stroke-width="1.500"/></svg>
      <svg class="w-[7px] h-[4px] ml-[7px] mt-[5px]"><use href="#dn"/></svg>
      <svg class="w-[16px] h-[16px] ml-[5px]" viewBox="0 0 16 16"><path d="M1 4 4 1H16V16H1Z" fill="#5f82b8" stroke="#1c3c66"/><path d="M4 1V16M1 4H16" stroke="#dfe8f4"/></svg>
      <svg class="w-[7px] h-[4px] ml-[7px] mt-[5px]"><use href="#dn"/></svg>
      <svg class="w-[16px] h-[16px] ml-[6px]" viewBox="0 0 16 16"><ellipse cx="8" cy="7" rx="7" ry="3" fill="none" stroke="#333"/><circle cx="8" cy="7" r="2" fill="#1a6fd0"/><path d="M8 2V0" stroke="#333"/></svg>
      <svg class="w-[7px] h-[4px] ml-[6px] mt-[5px]"><use href="#dn"/></svg>
      <svg class="w-[16px] h-[16px] ml-[5px]"><use href="#wedge"/></svg>
      <svg class="w-[18px] h-[16px] ml-[9px]" viewBox="0 0 18 16"><circle cx="5" cy="9" r="3.500" fill="none" stroke="#1c3c66"/><circle cx="13" cy="7" r="3.500" fill="none" stroke="#1c3c66"/><path d="M8 8 10 7M4 6 8 1M12 4 16 0" stroke="#1c3c66" fill="none"/></svg>
      <svg class="w-[7px] h-[4px] mt-[5px]"><use href="#dn"/></svg>
    </div>
    <div class="absolute left-[850px] top-0 w-[16px] h-[15px] bg-[#c8c8c8] pl-[1px] pt-[2px]"><svg class="w-[16px] h-[16px]" viewBox="0 0 16 16"><path d="M1 4 4 1H16V16H1Z" fill="#7e9fd6" stroke="#1c3c66"/></svg></div>
  </div>
</div>
</body>
</html>
